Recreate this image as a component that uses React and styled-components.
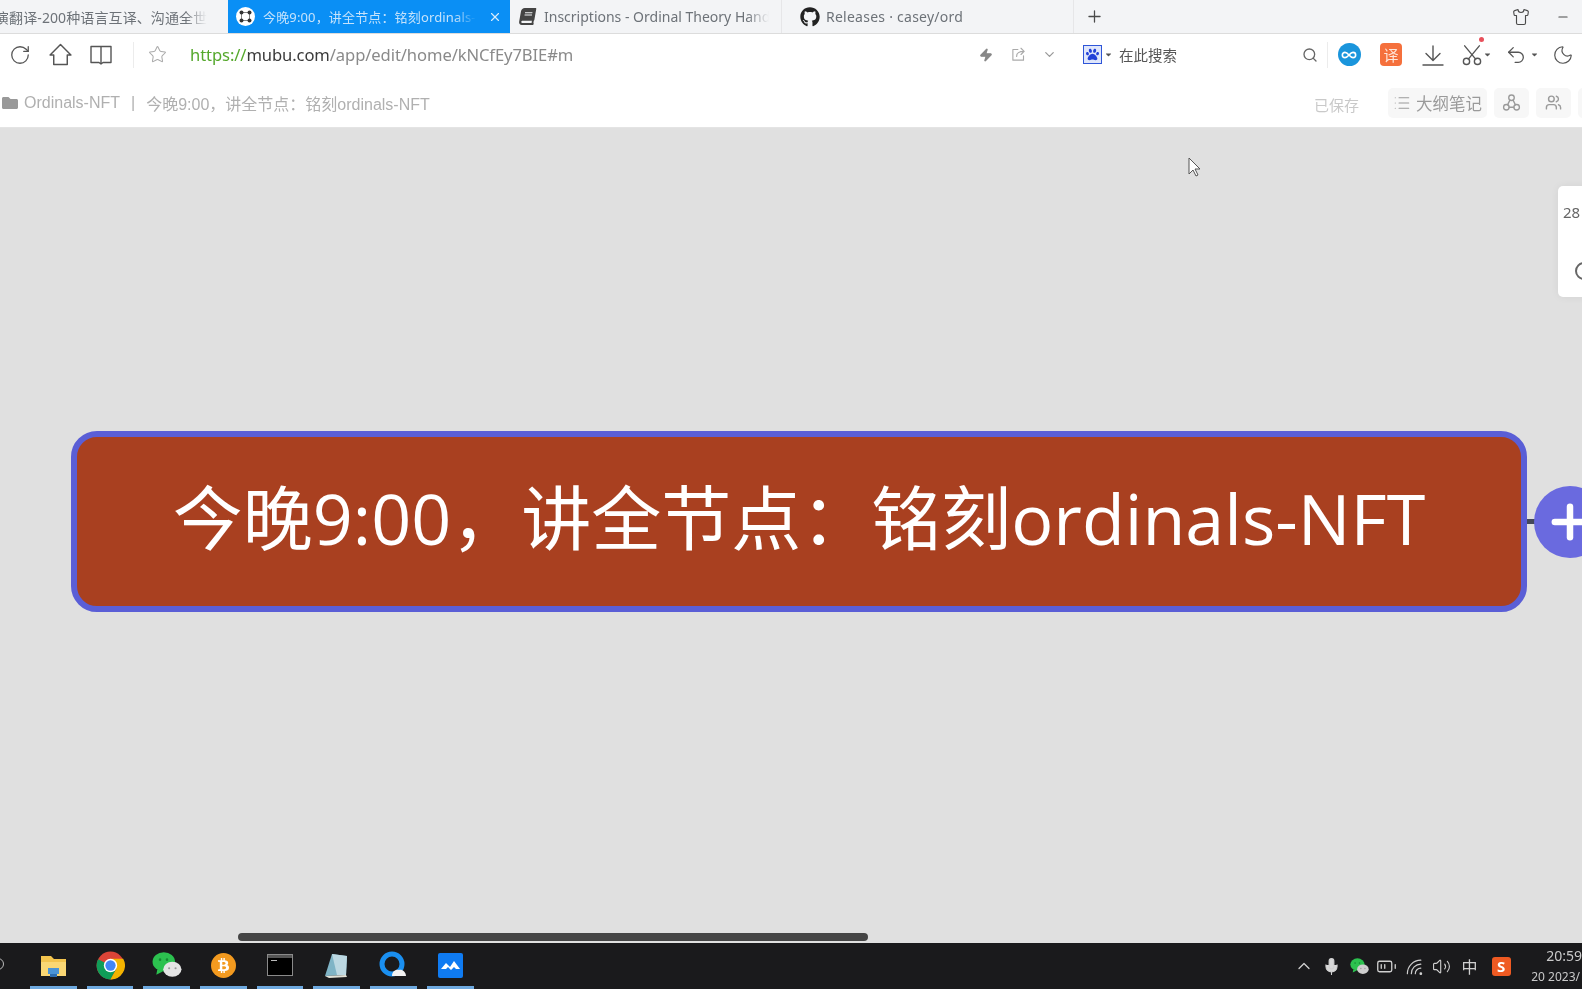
import React from 'react';
import styled, { createGlobalStyle } from 'styled-components';
import { FaGithub, FaBook, FaBtc, FaPaw, FaFolder, FaCaretDown } from 'react-icons/fa';
import {
  RotateCw, Star, Zap, ChevronDown, ChevronUp, Search, Moon, Shirt, Minus, Plus, X,
  Infinity as InfinityIcon, List, Users, Mic, Volume2, BatteryMedium, Undo2,
} from 'lucide-react';

const FONT = `"Noto Sans", "Noto Sans CJK SC", sans-serif`;

const Global = createGlobalStyle`
  html, body { margin: 0; height: 100%; overflow: hidden; background: #e0e0e0; }
  * { box-sizing: border-box; }
`;

const Page = styled.div`
  width: 1582px;
  height: 989px;
  display: grid;
  grid-template-rows: 34px 44px 50px 1fr 46px;
  overflow: hidden;
  font-family: ${FONT};
  filter: blur(0.7px);
`;

const TabStrip = styled.div`
  display: flex;
  align-items: stretch;
  background: #f3f4f6;
  border-bottom: 1px solid #dcdcdc;
  overflow: hidden;
`;

const Tab = styled.div`
  flex: 0 0 ${(p) => p.$w}px;
  display: flex;
  align-items: center;
  gap: ${(p) => p.$gap || 8}px;
  padding-left: ${(p) => p.$pad}px;
  font-size: ${(p) => (p.$active ? 13 : 14)}px;
  white-space: nowrap;
  overflow: hidden;
  color: ${(p) => (p.$active ? '#c4e2fb' : '#6d7278')};
  background: ${(p) => (p.$active ? '#0a8ff5' : 'transparent')};
  border-right: ${(p) => (p.$line ? '1px solid #e6e6e8' : 'none')};
`;

const TabLabel = styled.span`
  flex: 0 0 ${(p) => p.$w}px;
  overflow: hidden;
  margin-left: ${(p) => p.$shift || 0}px;
  letter-spacing: ${(p) => p.$track || 0}px;
  -webkit-mask-image: ${(p) => (p.$fade ? 'linear-gradient(to right, #000 90%, transparent)' : 'none')};
  mask-image: ${(p) => (p.$fade ? 'linear-gradient(to right, #000 90%, transparent)' : 'none')};
`;

const BookMark = styled.span`
  flex: none;
  display: flex;
  transform: skewX(-10deg);
`;

const MubuIcon = styled.span`
  flex: none;
  width: 19px;
  height: 19px;
  border-radius: 50%;
  background: #fff;
  display: grid;
  place-items: center;
`;

const TabClose = styled.span`
  display: flex;
  margin-left: 4px;
  color: #d6ecfc;
`;

const StripEnd = styled.div`
  flex: 1;
  display: flex;
  align-items: center;
  color: #4a4a4a;
  padding-left: 11px;
`;

const StripRight = styled.div`
  margin-left: auto;
  display: flex;
  align-items: center;
  gap: 26px;
  padding-right: 12px;
`;

const AddressBar = styled.div`
  display: flex;
  align-items: center;
  padding-bottom: 3px;
  background: #fff;
`;

const Slot = styled.span`
  flex: 0 0 ${(p) => p.$w}px;
  display: flex;
  align-items: center;
  justify-content: center;
  position: relative;
  color: ${(p) => p.$color || '#555'};
`;

const Divider = styled.span`
  flex: none;
  width: 1px;
  height: 26px;
  background: #ececec;
`;

const Url = styled.div`
  flex: 1;
  padding-left: 9px;
  font-size: 16.6px;
  color: #8a8a8a;
  white-space: nowrap;
  letter-spacing: -0.1px;
`;

const UrlScheme = styled.span`color: #55a82c;`;
const UrlHost = styled.span`color: #3a3a3a;`;

const RightTools = styled.div`
  flex: 0 0 612px;
  display: flex;
  align-items: center;
`;

const SearchBox = styled.div`
  flex: 0 0 262px;
  display: flex;
  align-items: center;
  padding-left: 18px;
`;

const PawBadge = styled.span`
  width: 19px;
  height: 19px;
  display: grid;
  place-items: center;
  background: #dfe6fb;
  border: 1px solid #2e55d8;
  color: #2140d8;
`;

const SearchHint = styled.span`
  margin-left: 6px;
  font-size: 14.5px;
  color: #555;
  flex: 1;
`;

const BlueDot = styled.span`
  width: 23px;
  height: 23px;
  border-radius: 50%;
  background: #1a95dc;
  color: #fff;
  display: grid;
  place-items: center;
`;

const FanyiBadge = styled.span`
  width: 22px;
  height: 23px;
  border-radius: 4px;
  background: #f5703c;
  color: #ffe6da;
  font-size: 15px;
  display: grid;
  place-items: center;
`;

const RedDot = styled.span`
  position: absolute;
  top: -7px;
  left: 25px;
  width: 5px;
  height: 5px;
  border-radius: 50%;
  background: #e8505b;
`;

const DocBar = styled.div`
  display: flex;
  align-items: center;
  padding-left: 2px;
  background: #fff;
  border-bottom: 1px solid #e4e4e4;
  font-family: "Liberation Sans", "Noto Sans CJK SC", sans-serif;
  font-size: 16px;
  color: #b0b0b0;
  white-space: nowrap;
  overflow: hidden;
`;

const Crumbs = styled.div`
  flex: 0 0 1312px;
  display: flex;
  align-items: center;
  gap: 6px;
`;

const CrumbSep = styled.span`margin: 0 5px;`;

const Saved = styled.span`
  flex: none;
  width: 74px;
  font-size: 15px;
  color: #c9c9c9;
  padding-top: 3px;
`;

const GhostButton = styled.div`
  flex: none;
  height: 30px;
  width: ${(p) => p.$w}px;
  margin-right: 7px;
  display: flex;
  align-items: center;
  justify-content: center;
  gap: 5px;
  border-radius: 5px;
  background: #f7f7f7;
  color: #9a9a9a;
  font-size: 16.5px;
`;

const Canvas = styled.div`
  position: relative;
  background: #e0e0e0;
  overflow: hidden;
`;

const Node = styled.div`
  position: absolute;
  left: 71px;
  top: 303px;
  width: 1456px;
  height: 181px;
  padding-bottom: 14px;
  display: flex;
  align-items: center;
  justify-content: center;
  border: 6px solid #5a5ed6;
  border-radius: 26px;
  background: #a94020;
  color: #fff;
  font-size: 70px;
  font-weight: 400;
  white-space: nowrap;
  font-family: "Open Sans", "Noto Sans CJK SC", sans-serif;
`;

const Connector = styled.div`
  position: absolute;
  left: 1527px;
  top: 391px;
  width: 8px;
  height: 5px;
  background: #44485c;
`;

const AddButton = styled.div`
  position: absolute;
  left: 1534px;
  top: 358px;
  width: 72px;
  height: 72px;
  border-radius: 50%;
  background: #6a6adf;
  color: #fff;
  display: grid;
  place-items: center;
`;

const SidePanel = styled.div`
  position: absolute;
  left: 1558px;
  top: 58px;
  width: 60px;
  height: 111px;
  padding: 16px 0 0 5px;
  border-radius: 5px;
  background: #fff;
  box-shadow: 0 0 8px rgba(0, 0, 0, 0.06);
  color: #666;
  font-size: 15px;
`;

const PanelDial = styled.span`
  position: absolute;
  left: 17px;
  top: 76px;
  width: 18px;
  height: 18px;
  border-radius: 50%;
  border: 2px solid #666;
`;

const Pointer = styled.svg`
  position: absolute;
  left: 1188px;
  top: 29px;
`;

const ScrollThumb = styled.div`
  position: absolute;
  left: 238px;
  top: 805px;
  width: 630px;
  height: 8px;
  border-radius: 4px;
  background: #454545;
`;

const Taskbar = styled.div`
  display: flex;
  align-items: center;
  padding-left: 25px;
  background: #1a1a1c;
  position: relative;
  overflow: hidden;
`;

const StartDot = styled.span`
  position: absolute;
  left: -8px;
  top: 15px;
  width: 12px;
  height: 12px;
  border-radius: 50%;
  border: 1.5px solid #bbb;
`;

const AppSlot = styled.div`
  flex: 0 0 56.7px;
  height: 46px;
  display: flex;
  align-items: center;
  justify-content: center;
  padding-bottom: 2px;
  position: relative;
  &::after {
    content: '';
    position: absolute;
    left: 5px;
    right: 5px;
    bottom: 0;
    height: 3px;
    background: #6ea9df;
  }
`;

const BitcoinBadge = styled.span`
  width: 25px;
  height: 25px;
  border-radius: 50%;
  background: #f39a1f;
  color: #fff;
  display: grid;
  place-items: center;
`;

const Tray = styled.div`
  margin-left: auto;
  flex: 0 0 281px;
  display: flex;
  align-items: center;
  color: #d0d0d0;
  white-space: nowrap;
`;

const TraySlot = styled.span`
  flex: 0 0 ${(p) => p.$w || 27.5}px;
  display: flex;
  align-items: center;
  justify-content: center;
  font-size: ${(p) => p.$size || 15}px;
`;

const Clock = styled.div`
  flex: none;
  margin-left: 12px;
  font-size: 14px;
  line-height: 21px;
  color: #c9c9c9;
`;

const ClockTime = styled.div`padding-left: 15px;`;
const ClockDate = styled.div`font-size: 12px;`;

const Sogou = styled.span`
  width: 19px;
  height: 19px;
  border-radius: 3px;
  background: #ef5a22;
  color: #fff;
  font-weight: 700;
  font-size: 15px;
  line-height: 19px;
  text-align: center;
`;

// line icons that the packages do not have in this shape
const Line = ({ size = 24, w = 1.4, children }) => (
  <svg width={size} height={size} viewBox="0 0 24 24" fill="none" stroke="currentColor" strokeWidth={w} strokeLinejoin="round" strokeLinecap="round">
    {children}
  </svg>
);

const HouseIcon = () => (
  <Line size={25}><path d="M2 12.5 12 2.5l10 10h-3.5V21.5h-13V12.5z" /></Line>
);

const OpenBookIcon = () => (
  <Line size={24}><path d="M2 3.5h20v16h-8l-2 1.5-2-1.5H2zM12 3.5v16" /></Line>
);

const ShareBoxIcon = () => (
  <Line size={15} w={1.8}><path d="M11 4H3v17h17v-7M9 15c0-6 4-8 12-8M16 2l5 5-5 5" /></Line>
);

const TrayDownIcon = () => (
  <Line size={24} w={1.4}><path d="M12 3v14M5 10.5l7 7 7-7M2 22h20" /></Line>
);

const OpenScissorsIcon = () => (
  <Line size={22} w={1.5}>
    <circle cx="6" cy="19" r="3.4" />
    <circle cx="18" cy="19" r="3.4" />
    <path d="M8 16.5 20 2M16 16.5 4 2" />
  </Line>
);

const NodesIcon = () => (
  <Line size={19} w={1.7}>
    <circle cx="12" cy="6" r="3.5" />
    <circle cx="5.5" cy="18" r="3.5" />
    <circle cx="18.5" cy="18" r="3.5" />
    <path d="M10 9 7 15M14 9l3 6M9 18h6" />
  </Line>
);

const WifiArcsIcon = () => (
  <Line size={19} w={1.5}>
    <circle cx="20" cy="21" r="1" fill="currentColor" />
    <path d="M13 21a7 7 0 0 1 7-7M8 21a12 12 0 0 1 12-12M3 21A17 17 0 0 1 20 4" />
  </Line>
);

const MubuGlyph = () => (
  <svg width="13" height="13" viewBox="0 0 13 13">
    <path d="M2.5 2.5h8v8h-8z" fill="none" stroke="#666" strokeWidth="0.8" />
    <g fill="#333">
      <circle cx="2.5" cy="2.5" r="2" />
      <circle cx="10.5" cy="2.5" r="2" />
      <circle cx="2.5" cy="10.5" r="2" />
      <circle cx="10.5" cy="10.5" r="2" />
    </g>
  </svg>
);

const FolderApp = () => (
  <svg width="27" height="24" viewBox="0 0 27 24">
    <path d="M1 3h10l3 3h12v17H1z" fill="#f3c44e" />
    <rect x="1" y="9" width="25" height="14" fill="#fad774" />
    <rect x="8" y="15" width="11" height="6" fill="#4b94d6" />
    <rect x="10" y="21" width="7" height="3" fill="#2e6eb0" />
  </svg>
);

const ChromeApp = () => (
  <svg width="29" height="29" viewBox="0 0 48 48">
    <circle cx="24" cy="24" r="23" fill="#db4437" />
    <path d="M24 24 3.5 13.5A23 23 0 0 0 24 47l10-18z" fill="#0f9d58" />
    <path d="M24 13h21a23 23 0 0 1-21 34l10-18z" fill="#f4b400" />
    <circle cx="24" cy="24" r="11" fill="#fff" />
    <circle cx="24" cy="24" r="8.5" fill="#4285f4" />
  </svg>
);

const WechatApp = ({ size = 30, light = '#e4e4e4' }) => (
  <svg width={size} height={size} viewBox="0 0 28 28">
    <ellipse cx="11" cy="11" rx="10.5" ry="9" fill="#2cc14f" />
    <path d="M5 18l-1 5 6-3z" fill="#2cc14f" />
    <ellipse cx="19" cy="18" rx="8.5" ry="7" fill={light} />
    <circle cx="7.5" cy="9" r="1.2" fill="#168a33" />
    <circle cx="14" cy="9" r="1.2" fill="#168a33" />
    <circle cx="16" cy="17" r="1" fill="#999" />
    <circle cx="22" cy="17" r="1" fill="#999" />
  </svg>
);

const TerminalApp = () => (
  <svg width="26" height="22" viewBox="0 0 26 22">
    <rect x="0.5" y="0.5" width="25" height="21" fill="#000" stroke="#8a8a8a" />
    <rect x="1" y="1" width="24" height="3" fill="#555" />
    <rect x="4" y="6" width="6" height="1" fill="#bbb" />
  </svg>
);

const NotebookApp = () => (
  <svg width="25" height="25" viewBox="0 0 25 25">
    <path d="M8 1l15 2-1 19-21 1z" fill="#7fb4c6" />
    <path d="M8 1l15 2-1 19H13z" fill="#bcd8e2" />
    <path d="M1 23l21-1 1 2-18 1z" fill="#e2e2d8" />
  </svg>
);

const QuarkApp = () => (
  <svg width="28" height="28" viewBox="0 0 28 28">
    <circle cx="13" cy="13" r="10" fill="none" stroke="#1a8ff0" strokeWidth="5" />
    <path d="M13 25c0-5 4-7 7-6 3-1 7 2 7 6z" fill="#f2f2f2" />
  </svg>
);

const LarkApp = () => (
  <svg width="25" height="25" viewBox="0 0 25 25">
    <rect width="25" height="25" rx="2" fill="#0f7bf2" />
    <path d="M3 16l5-6 4 4 4-6 6 8h-4l-2-2-3 3-3-3-2 2z" fill="#fff" />
  </svg>
);

const App = () => {
  return (
    <Page>
      <Global />
      <TabStrip>
        <Tab $w={228} $pad={0}>
          <TabLabel $w={212} $shift={-5} $track={0.1} $fade>演翻译-200种语言互译、沟通全世界</TabLabel>
        </Tab>
        <Tab $w={282} $pad={8} $active>
          <MubuIcon><MubuGlyph /></MubuIcon>
          <TabLabel $w={213} $track={0.15} $fade>今晚9:00，讲全节点：铭刻ordinals-NFT</TabLabel>
          <TabClose><X size={14} /></TabClose>
        </Tab>
        <Tab $w={272} $pad={9} $line>
          <BookMark><FaBook size={17} color="#444" /></BookMark>
          <TabLabel $w={225} $fade>Inscriptions - Ordinal Theory Handbook</TabLabel>
        </Tab>
        <Tab $w={292} $pad={18} $gap={6} $line>
          <FaGithub size={20} color="#222" style={{ flex: 'none' }} />
          <TabLabel $w={150} $track={0.25}>Releases · casey/ord</TabLabel>
        </Tab>
        <StripEnd>
          <Plus size={19} strokeWidth={1.6} />
          <StripRight>
            <Shirt size={18} strokeWidth={1.5} />
            <Minus size={14} strokeWidth={2} />
          </StripRight>
        </StripEnd>
      </TabStrip>

      <AddressBar>
        <Slot $w={40}><RotateCw size={22} strokeWidth={1.4} /></Slot>
        <Slot $w={40}><HouseIcon /></Slot>
        <Slot $w={42}><OpenBookIcon /></Slot>
        <Slot $w={11} />
        <Divider />
        <Slot $w={47} $color="#aaa"><Star size={19} strokeWidth={1.3} /></Slot>
        <Url>
          <UrlScheme>https://</UrlScheme><UrlHost>mubu.com</UrlHost>/app/edit/home/kNCfEy7BIE#m
        </Url>
        <RightTools>
          <Slot $w={32} $color="#888"><Zap size={14} fill="#888" /></Slot>
          <Slot $w={32} $color="#aaa"><ShareBoxIcon /></Slot>
          <Slot $w={31} $color="#999"><ChevronDown size={15} /></Slot>
          <SearchBox>
            <PawBadge><FaPaw size={13} /></PawBadge>
            <FaCaretDown size={9} color="#555" style={{ marginLeft: 2 }} />
            <SearchHint>在此搜索</SearchHint>
            <Slot $w={34} $color="#666"><Search size={16} /></Slot>
          </SearchBox>
          <Divider />
          <Slot $w={42}><BlueDot><InfinityIcon size={16} strokeWidth={2.4} /></BlueDot></Slot>
          <Slot $w={42}><FanyiBadge>译</FanyiBadge></Slot>
          <Slot $w={42}><TrayDownIcon /></Slot>
          <Slot $w={45}>
            <OpenScissorsIcon />
            <RedDot />
            <FaCaretDown size={9} />
          </Slot>
          <Slot $w={46}>
            <Undo2 size={22} strokeWidth={1.4} />
            <FaCaretDown size={9} style={{ marginLeft: 3 }} />
          </Slot>
          <Slot $w={36}><Moon size={22} strokeWidth={1.3} /></Slot>
        </RightTools>
      </AddressBar>

      <DocBar>
        <Crumbs>
          <FaFolder size={16} color="#999" />
          <span>Ordinals-NFT</span>
          <CrumbSep>|</CrumbSep>
          <span>今晚9:00，讲全节点：铭刻ordinals-NFT</span>
        </Crumbs>
        <Saved>已保存</Saved>
        <GhostButton $w={99}><List size={18} strokeWidth={1.4} />大纲笔记</GhostButton>
        <GhostButton $w={35}><NodesIcon /></GhostButton>
        <GhostButton $w={35}><Users size={17} /></GhostButton>
        <GhostButton $w={35} />
      </DocBar>

      <Canvas>
        <Node>今晚9:00，讲全节点：铭刻ordinals-NFT</Node>
        <Connector />
        <AddButton><Plus size={52} strokeWidth={3} /></AddButton>
        <SidePanel>28<PanelDial /></SidePanel>
        <Pointer width="14" height="20" viewBox="0 0 14 20">
          <path d="M1 1v16l4-4 3 6 2-1-3-6h5z" fill="#fff" stroke="#555" strokeWidth="1" />
        </Pointer>
        <ScrollThumb />
      </Canvas>

      <Taskbar>
        <StartDot />
        <AppSlot><FolderApp /></AppSlot>
        <AppSlot><ChromeApp /></AppSlot>
        <AppSlot><WechatApp /></AppSlot>
        <AppSlot><BitcoinBadge><FaBtc size={15} /></BitcoinBadge></AppSlot>
        <AppSlot><TerminalApp /></AppSlot>
        <AppSlot><NotebookApp /></AppSlot>
        <AppSlot><QuarkApp /></AppSlot>
        <AppSlot><LarkApp /></AppSlot>
        <Tray>
          <TraySlot><ChevronUp size={20} strokeWidth={1.5} /></TraySlot>
          <TraySlot><Mic size={19} fill="#d8d8d8" strokeWidth={1.4} /></TraySlot>
          <TraySlot><WechatApp size={19} light="#cfcfcf" /></TraySlot>
          <TraySlot><BatteryMedium size={21} strokeWidth={1.5} /></TraySlot>
          <TraySlot><WifiArcsIcon /></TraySlot>
          <TraySlot><Volume2 size={19} strokeWidth={1.4} /></TraySlot>
          <TraySlot $size={16}>中</TraySlot>
          <TraySlot $w={36}><Sogou>S</Sogou></TraySlot>
          <Clock>
            <ClockTime>20:59</ClockTime>
            <ClockDate>20 2023/</ClockDate>
          </Clock>
        </Tray>
      </Taskbar>
    </Page>
  );
};

export default App;
